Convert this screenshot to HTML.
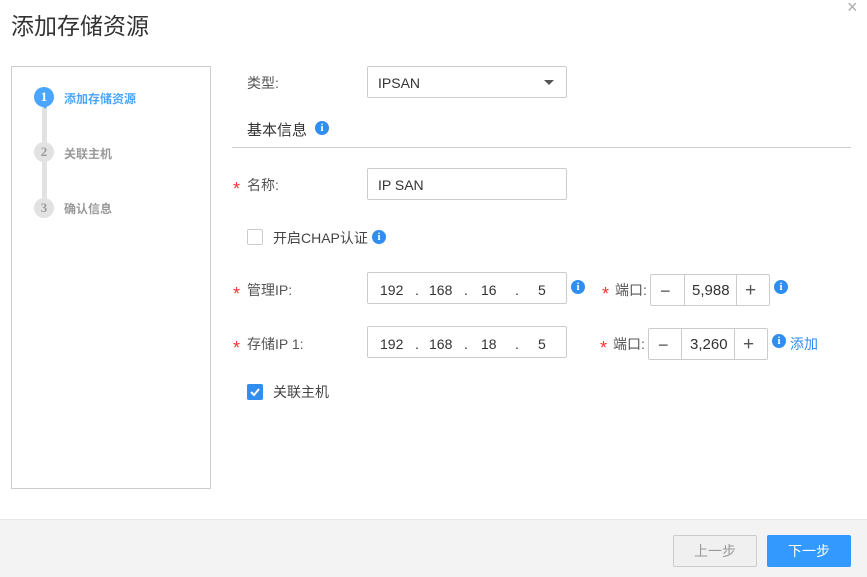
<!DOCTYPE html>
<html><head><meta charset="utf-8"><style>
*{box-sizing:border-box;margin:0;padding:0}
body{width:867px;height:577px;background:#fff;font-family:"Liberation Sans","Noto Sans CJK SC",sans-serif;color:#333;position:relative;overflow:hidden;font-size:14px}
.a{position:absolute}
.box{position:absolute;border:1px solid #ccc;border-radius:2px;background:#fff}
.lbl{position:absolute;font-size:14px;color:#555;line-height:16px}
.star{color:#f33;position:absolute;font-size:18px;line-height:16px}
.info{position:absolute;width:14px;height:14px;border-radius:50%;background:#2f8ef0;color:#fff;font-size:11px;font-weight:bold;text-align:center;line-height:14px;font-family:"Liberation Serif",serif}
.ip{position:absolute;font-size:14px;color:#333;line-height:16px}
.step{position:absolute;width:20px;height:20px;border-radius:50%;text-align:center;line-height:20px;font-size:13px;font-family:"Liberation Serif",serif;font-weight:bold}
</style></head><body>
<div class="a" style="left:11px;top:10px;font-size:23px;color:#333;line-height:32px">添加存储资源</div>
<div class="a" style="left:847px;top:-1px;font-size:18px;color:#aaa;line-height:16px">×</div>

<div class="box" style="left:11px;top:66px;width:200px;height:423px;border-radius:0"></div>
<div class="a" style="left:42px;top:100px;width:5px;height:108px;background:#e2e2e2"></div>
<div class="step" style="left:34px;top:87px;background:#4aa5ff;color:#fff">1</div>
<div class="a" style="left:41px;top:104px;width:0;height:0;border-left:4px solid transparent;border-right:4px solid transparent;border-top:5px solid #4aa5ff"></div>
<div class="step" style="left:34px;top:142px;background:#e2e2e2;color:#999">2</div>
<div class="step" style="left:34px;top:198px;background:#e2e2e2;color:#999">3</div>
<div class="a" style="left:64px;top:90px;font-size:12px;color:#4aa5ff;font-weight:bold">添加存储资源</div>
<div class="a" style="left:64px;top:145px;font-size:12px;color:#999;font-weight:bold">关联主机</div>
<div class="a" style="left:64px;top:200px;font-size:12px;color:#999;font-weight:bold">确认信息</div>

<div class="lbl" style="left:247px;top:75px">类型:</div>
<div class="box" style="left:367px;top:66px;width:200px;height:32px"></div>
<div class="ip" style="left:378px;top:75px">IPSAN</div>
<div class="a" style="left:544px;top:80px;border-left:5px solid transparent;border-right:5px solid transparent;border-top:5px solid #555"></div>

<div class="a" style="left:247px;top:119px;font-size:15px;color:#333">基本信息</div>
<div class="info" style="left:315px;top:121px">i</div>
<div class="a" style="left:232px;top:147px;width:619px;height:1px;background:#ccc"></div>

<span class="star" style="left:233px;top:181px">*</span><div class="lbl" style="left:247px;top:177px">名称:</div>
<div class="box" style="left:367px;top:168px;width:200px;height:32px"></div>
<div class="ip" style="left:378px;top:177px">IP SAN</div>

<div class="box" style="left:247px;top:229px;width:16px;height:16px"></div>
<div class="lbl" style="left:273px;top:230px;color:#444">开启CHAP认证</div>
<div class="info" style="left:372px;top:230px">i</div>

<span class="star" style="left:233px;top:286px">*</span><div class="lbl" style="left:247px;top:282px">管理IP:</div>
<div class="box" style="left:367px;top:272px;width:200px;height:32px"></div>
<div class="ip" style="left:380px;top:282px">192</div><div class="ip" style="left:415px;top:282px">.</div><div class="ip" style="left:429px;top:282px">168</div><div class="ip" style="left:464px;top:282px">.</div><div class="ip" style="left:481px;top:282px">16</div><div class="ip" style="left:515px;top:282px">.</div><div class="ip" style="left:538px;top:282px">5</div>
<div class="info" style="left:571px;top:280px">i</div>
<span class="star" style="left:602px;top:286px">*</span><div class="lbl" style="left:615px;top:282px">端口:</div>
<div class="box" style="left:650px;top:274px;width:120px;height:32px"></div>
<div class="a" style="left:684px;top:275px;width:1px;height:30px;background:#ccc"></div><div class="a" style="left:736px;top:275px;width:1px;height:30px;background:#ccc"></div>
<div class="a" style="left:660px;top:281px;font-size:18px;color:#555">−</div><div class="ip" style="left:692px;top:283px;font-size:15px">5,988</div><div class="a" style="left:745px;top:280px;font-size:19px;color:#555">+</div>
<div class="info" style="left:774px;top:280px">i</div>

<span class="star" style="left:233px;top:340px">*</span><div class="lbl" style="left:247px;top:336px">存储IP 1:</div>
<div class="box" style="left:367px;top:326px;width:200px;height:32px"></div>
<div class="ip" style="left:380px;top:336px">192</div><div class="ip" style="left:415px;top:336px">.</div><div class="ip" style="left:429px;top:336px">168</div><div class="ip" style="left:464px;top:336px">.</div><div class="ip" style="left:481px;top:336px">18</div><div class="ip" style="left:515px;top:336px">.</div><div class="ip" style="left:538px;top:336px">5</div>
<span class="star" style="left:600px;top:340px">*</span><div class="lbl" style="left:613px;top:336px">端口:</div>
<div class="box" style="left:648px;top:328px;width:120px;height:32px"></div>
<div class="a" style="left:681px;top:329px;width:1px;height:30px;background:#ccc"></div><div class="a" style="left:734px;top:329px;width:1px;height:30px;background:#ccc"></div>
<div class="a" style="left:658px;top:335px;font-size:18px;color:#555">−</div><div class="ip" style="left:690px;top:337px;font-size:15px">3,260</div><div class="a" style="left:743px;top:334px;font-size:19px;color:#555">+</div>
<div class="info" style="left:772px;top:334px">i</div>
<div class="a" style="left:790px;top:334px;font-size:14px;color:#2f8ef0">添加</div>

<div class="a" style="left:247px;top:384px;width:16px;height:16px;background:#2f8ef0;border-radius:2px"></div>
<svg class="a" style="left:247px;top:384px" width="16" height="16"><path d="M4 8 L7 11 L12 5" stroke="#fff" stroke-width="2" fill="none"/></svg>
<div class="lbl" style="left:273px;top:384px;color:#444">关联主机</div>

<div class="a" style="left:0;top:519px;width:867px;height:58px;background:#f3f3f3;border-top:1px solid #e8e8e8"></div>
<div class="a" style="left:673px;top:535px;width:84px;height:32px;border:1px solid #ccc;border-radius:2px;background:#f0f0f0;color:#999;text-align:center;line-height:30px">上一步</div>
<div class="a" style="left:767px;top:535px;width:84px;height:32px;border-radius:2px;background:#3399ff;color:#fff;text-align:center;line-height:32px">下一步</div>
</body></html>
